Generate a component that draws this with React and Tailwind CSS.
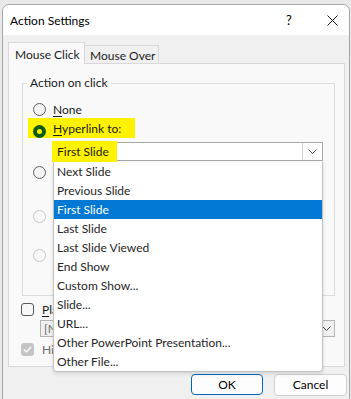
import React from "react";

const items = [
  "Next Slide",
  "Previous Slide",
  "First Slide",
  "Last Slide",
  "Last Slide Viewed",
  "End Show",
  "Custom Show...",
  "Slide...",
  "URL...",
  "Other PowerPoint Presentation...",
  "Other File...",
];

function Radio({ disabled }) {
  return (
    <span
      className={
        "block w-[13px] h-[13px] rounded-full border shrink-0 " +
        (disabled ? "border-[#c6c6c6] bg-[#f9f9f9]" : "border-[#5f5f5f] bg-[#f3f3f3]")
      }
    />
  );
}

function Chevron() {
  return (
    <svg width="9" height="5" viewBox="0 0 9 5" className="block">
      <path d="M0.5 0.5 L4.5 4.5 L8.5 0.5" fill="none" stroke="#4a4a4a" strokeWidth="1" />
    </svg>
  );
}

export default function App() {
  return (
    <div className="relative w-[351px] h-[399px] overflow-hidden bg-[#e9e9e9] pt-[4px] pl-[2px] text-[12px] leading-[15px] text-[#1b1b1b] font-['Lato',sans-serif]">
      <div className="w-[348px] h-[400px] bg-[#f0f0f0] border border-[#a6a6a6] rounded-t-[7px] overflow-hidden flex flex-col">
        {/* title bar */}
        <div className="h-[30px] shrink-0 bg-white flex items-center pl-[7px] pr-[11px]">
          <div className="flex-1 text-[12px] text-black">Action Settings</div>
          <div className="w-[14px] text-center text-[13px] text-black mr-[31px]">?</div>
          <svg width="11" height="11" viewBox="0 0 11 11" className="block">
            <path d="M0.5 0.5 L10.5 10.5 M10.5 0.5 L0.5 10.5" stroke="#1a1a1a" strokeWidth="1" />
          </svg>
        </div>

        {/* tabs */}
        <div className="flex items-end pt-[7px] ml-[5px]">
          <div className="relative z-10 w-[77px] h-[22px] -mb-[1px] border border-b-0 border-[#d9d9d9] bg-[#f9f9f9] pl-[6px] pt-[4px] whitespace-nowrap">
            Mouse Click
          </div>
          <div className="w-[74px] h-[18px] border border-l-0 border-b-0 border-[#d9d9d9] bg-[#f0f0f0] pl-[5px] pt-[2px] whitespace-nowrap">
            Mouse Over
          </div>
        </div>

        {/* tab panel */}
        <div className="ml-[5px] w-[337px] h-[304px] shrink-0 border border-[#d9d9d9] bg-[#f9f9f9] pt-[12px]">
          <fieldset className="ml-[13px] w-[313px] h-[220px] border border-[#dcdcdc]">
            <legend className="ml-[4px] px-[3px] leading-[14px]">Action on click</legend>
            <div className="flex items-center h-[19px] mt-[10px] pl-[10px] gap-[7px]">
              <Radio />
              <span>
                <u className="underline-offset-2">N</u>one
              </span>
            </div>
            <div className="flex items-end -mt-[1px] ml-[5px] w-[107px] h-[20px] bg-[#fff200] pl-[5px] gap-[7px]">
              <span className="flex items-center justify-center w-[13px] h-[13px] rounded-full bg-[#0a5c0a] shrink-0">
                <span className="block w-[5px] h-[5px] rounded-full bg-[#fff200]" />
              </span>
              <span className="pb-[2px]">
                <u className="underline-offset-2">H</u>yperlink to:
              </span>
            </div>
            <div className="flex items-center mt-[4px] ml-[29px] w-[271px] h-[19px] border border-[#a8a8a8] bg-white">
              <span className="flex items-center -ml-[1px] w-[65px] h-[21px] bg-[#fff200] pl-[5px] shrink-0">
                First Slide
              </span>
              <span className="flex-1" />
              <span className="flex items-center justify-center w-[20px] self-stretch border-l border-[#cfcfcf] bg-white">
                <Chevron />
              </span>
            </div>
            <div className="flex items-center h-[19px] mt-[2px] pl-[10px] gap-[7px]">
              <Radio />
              <span>Run program:</span>
            </div>
            <div className="flex items-center h-[19px] mt-[25px] pl-[10px] gap-[7px] text-[#a0a0a0]">
              <Radio disabled />
              <span>Run macro:</span>
            </div>
            <div className="flex items-center h-[19px] mt-[20px] pl-[10px] gap-[7px] text-[#a0a0a0]">
              <Radio disabled />
              <span>Object action:</span>
            </div>
          </fieldset>

          <div className="flex items-center h-[20px] mt-[3px] pl-[12px] gap-[8px]">
            <span className="block w-[13px] h-[13px] rounded-[3px] border border-[#5a5a5a] bg-[#f7f7f7] shrink-0" />
            <span>
              <u className="underline-offset-2">P</u>lay sound:
            </span>
          </div>
          <div className="flex items-center mt-[1px] ml-[31px] w-[295px] h-[17px] border border-[#b4b4b4] bg-[#f0f0f0] pl-[3px]">
            <span className="flex-1 text-[#6a6a6a]">[No Sound]</span>
            <span className="flex items-center justify-center w-[17px] self-stretch border-l border-[#cfcfcf]">
              <Chevron />
            </span>
          </div>
          <div className="flex items-center h-[20px] mt-[2px] pl-[12px] gap-[8px] text-[#6f6f6f]">
            <span className="flex items-center justify-center w-[13px] h-[13px] rounded-[3px] bg-[#c5c5c5] shrink-0">
              <svg width="9" height="7" viewBox="0 0 9 7" className="block">
                <path d="M1 3.5 L3.5 6 L8 1" fill="none" stroke="#ffffff" strokeWidth="1.2" />
              </svg>
            </span>
            <span>Highlight click</span>
          </div>
        </div>

        {/* buttons */}
        <div className="flex justify-end gap-[11px] mt-[7px] pr-[2px]">
          <button className="w-[72px] h-[21px] rounded-[4px] border border-[#0067c0] bg-[#fdfdfd] text-[12px] leading-[19px] text-black">
            OK
          </button>
          <button className="w-[73px] h-[22px] rounded-[4px] border border-[#d0d0d0] bg-[#fdfdfd] text-[12px] leading-[20px] text-black">
            Cancel
          </button>
        </div>
      </div>

      {/* open dropdown list */}
      <div className="absolute left-[53px] top-[162px] w-[270px] h-[210px] bg-white border border-t-0 border-[#c2c2c2] rounded-b-[4px] shadow-[0_2px_4px_rgba(0,0,0,0.12)] overflow-hidden">
        {items.map((t, i) => (
          <div
            key={t}
            className={
              "h-[19px] leading-[19px] pl-[3px] " +
              (i === 2 ? "bg-[#0078d4] text-white" : "text-[#262626]")
            }
          >
            {t}
          </div>
        ))}
      </div>
    </div>
  );
}
